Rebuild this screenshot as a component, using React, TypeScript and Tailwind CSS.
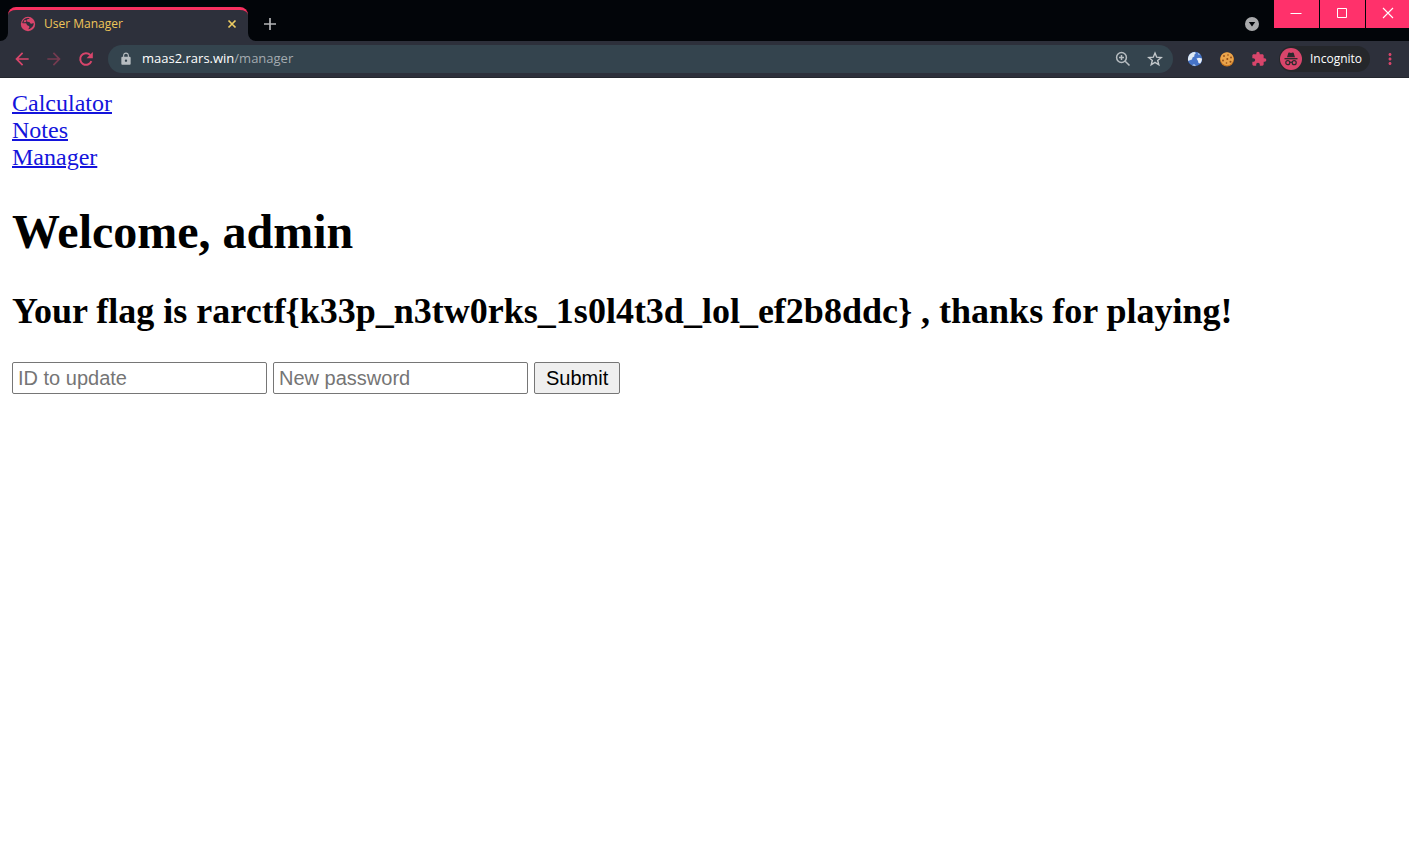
import React from "react";
import { MdArrowBack, MdArrowForward, MdLock, MdExtension, MdMoreVert } from "react-icons/md";

const pink = "text-[#d8456b]";

function PageIcon() {
  return (
    <svg viewBox="0 0 16 16" className="size-4 shrink-0" aria-hidden="true">
      <circle cx="8" cy="8" r="7.200" fill="#d8456b" />
      <path
        d="M9.800 2.400C8 3 6.200 3.200 6.600 4.800c.3 1.300 2 .9 3 1.500.8.500.4 1.600 1.700 1.500.9-.1 1.600-.7 2.500-.3-.1 1.400-1 3-2.100 4-.9.800-2.400 1.800-3.400 1.700.4-1.200 1.300-1.400 1.100-2.500-.2-1-1.700-.8-2.400-1.700-.5-.8-.2-1.600-1.200-1.800-1.100-.2-2.300.2-3.500-.2 0-1.400.9-3 2.100-3.800 1.500-1 3.500-1.400 5.400-.8z"
        fill="#2d303b"
      />
      <path d="M4.400 4.200c1.200-.8 2.200.2 1.900 1.200-.3.900-1.800.7-2.900 1z" fill="#d8456b" />
    </svg>
  );
}

function GlobeIcon() {
  return (
    <svg viewBox="0 0 16 16" className="size-4" aria-hidden="true">
      <circle cx="8" cy="8" r="7.200" fill="#4674c8" />
      <path d="M1.200 10C.2 5 3 1.300 7.500.9L9 2 7.500 3.500 7.300 5.500 5.500 6.500 5 8.500 3.500 9z" fill="#dfe9f3" />
      <path d="M9.500 7.500l2.500-.8 2.900.8c.2 2-.7 3.800-1.700 4.900l-1.700-.4-.5-2z" fill="#e9eff7" />
      <path d="M10.500 1.700l2.800 1.600-1.800.7z" fill="#a9c4e8" />
      <path d="M5 14.300l2-1.300 2 1.500-1.500.6z" fill="#a9c4e8" />
    </svg>
  );
}

function CookieIcon() {
  return (
    <svg viewBox="0 0 16 16" className="size-4" aria-hidden="true">
      <circle cx="8" cy="8.500" r="7" fill="#c97822" />
      <circle cx="8" cy="7.700" r="6.500" fill="#eaa44b" />
      <g fill="#8f4a16">
        <circle cx="5" cy="5" r=".9" />
        <circle cx="9" cy="4" r=".8" />
        <circle cx="12" cy="6.500" r=".9" />
        <circle cx="8.300" cy="8" r="1" />
        <circle cx="4" cy="9.500" r=".9" />
        <circle cx="7.500" cy="12" r=".8" />
        <circle cx="11.500" cy="10.700" r="1" />
      </g>
    </svg>
  );
}

function ReloadIcon() {
  return (
    <svg viewBox="0 0 16 16" className={"size-4 " + pink} aria-hidden="true">
      <path d="M13.400 10.200A5.800 5.800 0 1 1 12.200 4" fill="none" stroke="currentColor" strokeWidth="2" />
      <path d="M14.800 1v6.200H8.600z" fill="currentColor" />
    </svg>
  );
}

function ZoomIcon() {
  return (
    <svg viewBox="0 0 16 16" className="size-4 text-[#b7bdc1]" fill="none" stroke="currentColor" strokeWidth="1.500" aria-hidden="true">
      <circle cx="6.500" cy="6.500" r="4.900" />
      <path d="M10.200 10.200l4.300 4.300M6.500 4v5M4 6.500h5" />
    </svg>
  );
}

function StarIcon() {
  return (
    <svg viewBox="0 0 16 16" className="size-4 text-[#c3c8cb]" aria-hidden="true">
      <path
        d="M8 2l1.700 4.200 4.500.3-3.500 2.900 1.100 4.400L8 11.400l-3.800 2.400 1.100-4.400-3.500-2.900 4.500-.3z"
        fill="none"
        stroke="currentColor"
        strokeWidth="1.400"
      />
    </svg>
  );
}

function IncognitoIcon() {
  return (
    <svg viewBox="0 0 22 22" className="size-[22px] shrink-0" aria-hidden="true">
      <circle cx="11" cy="11" r="11" fill="#d8456b" />
      <path d="M7 9.300l1.300-4.200q.2-.7.900-.5l1.800.5 1.800-.5q.7-.2.900.5L15 9.300z" fill="#292a2d" />
      <path d="M4.500 10.700h13" stroke="#292a2d" strokeWidth="1.300" />
      <g fill="none" stroke="#292a2d" strokeWidth="1.200">
        <circle cx="7.800" cy="14.700" r="2" />
        <circle cx="14.200" cy="14.700" r="2" />
        <path d="M9.800 14.400q1.200-.7 2.400 0" />
      </g>
    </svg>
  );
}

function ToolButton({ label, children }: { label: string; children: React.ReactNode }) {
  return (
    <button type="button" aria-label={label} className="flex h-7 w-8 shrink-0 items-center justify-center">
      {children}
    </button>
  );
}

function TabStrip() {
  return (
    <header className="flex h-[41px] items-start bg-[#020509]">
      <div className="flex h-[41px] items-end pt-[7px]">
        <div className="h-2 w-2 bg-[#2d303b]">
          <div className="size-full rounded-br-lg bg-[#020509]" />
        </div>
        <div className="flex h-full w-60 items-center overflow-hidden rounded-t-lg border-t-3 border-[#f8305f] bg-[#2d303b] pr-2 pb-1 pl-3">
          <PageIcon />
          <span className="ml-2 grow text-xs text-[#f0c659]">User Manager</span>
          <button type="button" aria-label="Close tab" className="flex size-4 items-center justify-center">
            <svg viewBox="0 0 16 16" className="size-4" aria-hidden="true">
              <path d="M4.500 4.500l7 7m0-7l-7 7" stroke="#eccb62" strokeWidth="1.700" />
            </svg>
          </button>
        </div>
        <div className="h-2 w-2 bg-[#2d303b]">
          <div className="size-full rounded-bl-lg bg-[#020509]" />
        </div>
      </div>
      <button type="button" aria-label="New tab" className="mt-2.5 flex h-7 w-7 items-center justify-center">
        <svg viewBox="0 0 14 14" className="size-3.5" aria-hidden="true">
          <path d="M7 1v12M1 7h12" stroke="#b4b5b7" strokeWidth="1.700" />
        </svg>
      </button>
      <div className="grow" />
      <button type="button" aria-label="Search tabs" className="mt-4 mr-3.5 flex size-4 items-center justify-center">
        <svg viewBox="0 0 16 16" className="size-4" aria-hidden="true">
          <circle cx="8" cy="8" r="7" fill="#a9aaac" />
          <path d="M4.800 6h6.400L8 10.400z" fill="#020509" />
        </svg>
      </button>
      <div className="flex gap-px">
        <button type="button" aria-label="Minimize" className="flex h-7 w-[45px] items-center justify-center bg-[#ff316b] pr-px">
          <svg viewBox="0 0 12 12" className="mb-0.5 size-3" aria-hidden="true">
            <path d="M.5 6.500h11" stroke="#fff" />
          </svg>
        </button>
        <button type="button" aria-label="Maximize" className="flex h-7 w-[45px] items-center justify-center bg-[#ff316b] pr-px">
          <svg viewBox="0 0 12 12" className="mb-0.5 size-3" aria-hidden="true">
            <path d="M1.500 1.500h9v9h-9z" fill="none" stroke="#fff" />
          </svg>
        </button>
        <button type="button" aria-label="Close" className="flex h-7 w-[43px] items-center justify-center bg-[#ff316b]">
          <svg viewBox="0 0 12 12" className="mb-0.5 size-3" aria-hidden="true">
            <path d="M1 1l10 10M11 1L1 11" stroke="#fff" strokeWidth="1.100" />
          </svg>
        </button>
      </div>
    </header>
  );
}

function Toolbar() {
  return (
    <nav aria-label="Browser toolbar" className="flex h-[37px] items-center border-b border-[#24272e] bg-[#2d303b] pr-[3px] pl-1.5">
      <ToolButton label="Back"><MdArrowBack className={"size-5 " + pink} /></ToolButton>
      <ToolButton label="Forward"><MdArrowForward className="size-5 text-[#753b50]" /></ToolButton>
      <ToolButton label="Reload"><ReloadIcon /></ToolButton>
      <div className="mx-1.5 flex h-7 grow items-center rounded-full bg-[#34444e] pl-2.5">
        <span className="flex w-4 justify-center"><MdLock className="size-3.5 text-[#b7bdc1]" /></span>
        <a href="/manager" className="ml-2 grow text-[13px] text-[#a3abb0]">
          <span className="text-white">maas2.rars.win</span>/manager
        </a>
        <ToolButton label="Zoom"><ZoomIcon /></ToolButton>
        <ToolButton label="Bookmark"><StarIcon /></ToolButton>
        <span className="w-0.5" />
      </div>
      <ToolButton label="Web extension"><GlobeIcon /></ToolButton>
      <ToolButton label="Cookies"><CookieIcon /></ToolButton>
      <ToolButton label="Extensions"><MdExtension className={"size-4 " + pink} /></ToolButton>
      <button type="button" className="mx-1 flex h-[26px] w-[91px] items-center gap-2 rounded-full bg-[#25272b] pl-px text-xs text-white">
        <IncognitoIcon />
        Incognito
      </button>
      <ToolButton label="Menu"><MdMoreVert className={"size-[18px] " + pink} /></ToolButton>
    </nav>
  );
}

const field = "h-8 w-[255px] rounded-xs border border-[#767676] bg-white px-[5px] text-xl leading-6 text-black placeholder:text-[#757575]";
const link = "underline decoration-2";

export default function App() {
  return (
    <div className="min-h-screen bg-white font-['Open_Sans','Noto_Sans',sans-serif]">
      <TabStrip />
      <Toolbar />
      <main className="p-3 font-['Liberation_Serif',serif] text-2xl leading-[27px] text-black">
        <div className="flex flex-col items-start text-[#1414dc]">
          <a href="/calculator" className={link}>Calculator</a>
          <a href="/notes" className={link}>Notes</a>
          <a href="/manager" className={link}>Manager</a>
        </div>
        <h1 className="mt-[33px] text-5xl leading-[55px] font-bold">Welcome, admin</h1>
        <h2 className="mt-8 text-4xl leading-[41px] font-bold">
          Your flag is rarctf&#123;k33p_n3tw0rks_1s0l4t3d_lol_ef2b8ddc&#125; , thanks for playing!
        </h2>
        <form className="mt-[30px] flex flex-wrap gap-1.5 font-['Liberation_Sans',sans-serif]" onSubmit={(e) => e.preventDefault()}>
          <input aria-label="ID to update" placeholder="ID to update" className={field} />
          <input aria-label="New password" placeholder="New password" className={field} />
          <button type="submit" className="h-8 rounded-xs border border-[#767676] bg-[#efefef] px-[11px] text-xl leading-6">Submit</button>
        </form>
      </main>
    </div>
  );
}
